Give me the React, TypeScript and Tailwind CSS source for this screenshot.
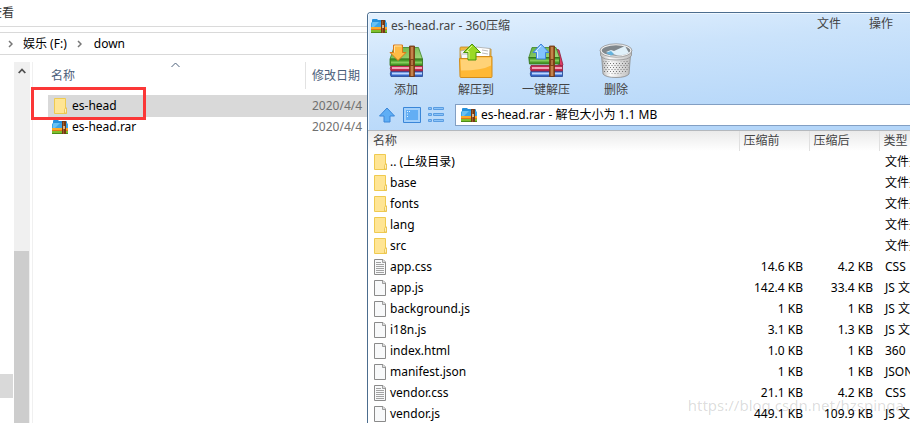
import { useId } from "react";

const folderType = "文件夹";

const entries = [
  { name: ".. (上级目录)", kind: "folder", before: "", after: "", type: folderType },
  { name: "base", kind: "folder", before: "", after: "", type: folderType },
  { name: "fonts", kind: "folder", before: "", after: "", type: folderType },
  { name: "lang", kind: "folder", before: "", after: "", type: folderType },
  { name: "src", kind: "folder", before: "", after: "", type: folderType },
  { name: "app.css", kind: "text", before: "14.6 KB", after: "4.2 KB", type: "CSS" },
  { name: "app.js", kind: "file", before: "142.4 KB", after: "33.4 KB", type: "JS 文件" },
  { name: "background.js", kind: "file", before: "1 KB", after: "1 KB", type: "JS 文件" },
  { name: "i18n.js", kind: "file", before: "3.1 KB", after: "1.3 KB", type: "JS 文件" },
  { name: "index.html", kind: "file", before: "1.0 KB", after: "1 KB", type: "360" },
  { name: "manifest.json", kind: "file", before: "1 KB", after: "1 KB", type: "JSON 文件" },
  { name: "vendor.css", kind: "text", before: "21.1 KB", after: "4.2 KB", type: "CSS" },
  { name: "vendor.js", kind: "file", before: "449.1 KB", after: "109.9 KB", type: "JS 文件" },
];

function FolderIcon() {
  return (
    <svg width="14" height="16" viewBox="0 0 14 16" className="shrink-0">
      <path d="M.5.5h11v9.500h1v5.500H.5z" fill="#ffe594" stroke="#efca50" />
      <path d="M10.500 15v-3.500l1-1.500h1V15z" fill="#fff0b8" stroke="#e8bf48" strokeWidth=".8" />
    </svg>
  );
}

function FileIcon({ lined }: { lined?: boolean }) {
  return (
    <svg width="14" height="16" viewBox="0 0 14 16" className="shrink-0">
      <path d="M.5.5H9L11.500 3v12.500H.5z" fill="#f8f9fa" stroke="#8a8a8a" />
      <path d="M8.500.500V3.500h3" fill="#dcdcdc" stroke="#8a8a8a" strokeWidth=".8" />
      {lined && <path d="M2 3.500h5M2 5.500h8M2 7.500h8M2 9.500h8M2 11.500h8M2 13.500h8" stroke="#a2a2a2" />}
    </svg>
  );
}

function RarIcon() {
  return (
    <svg width="16" height="14" viewBox="0 0 16 14" className="shrink-0">
      <path d="M1 1q0-1 1-1h4l1 1h7q1 0 1 1v6H1z" fill="#2490db" />
      <path d="M0 4l1-1h14l1 1v4H0z" fill="#3ba5e8" />
      <path d="M1 4l1-1h6L3 8H1z" fill="#69c1f2" />
      <path d="M0 8h16v3H0z" fill="#fba929" />
      <path d="M0 10h16v1H0z" fill="#e07818" />
      <path d="M0 11h16v3H0z" fill="#7fbf2c" />
      <path d="M0 13h16v1H0z" fill="#4c8c17" />
      <path d="M10 1h4v13h-4z" fill="#743914" />
      <path d="M11 2h1v12h-1z" fill="#a0602e" />
      <path d="M11 6h2v3h-2z" fill="#dcb68c" />
    </svg>
  );
}

/* Stack of three books held by a strap */
function Books({ open }: { open?: boolean }) {
  const id = useId();
  return (
    <>
      <defs>
        <linearGradient id={id} x1="0" y1="0" x2="1" y2="1">
          <stop offset="0" stopColor="#62b043" />
          <stop offset="1" stopColor="#a4d97c" />
        </linearGradient>
      </defs>
      <path d="M3 28h31.500v5.500H3q-1.500-2.500 0-5.500z" fill="#3566c6" stroke="#24458f" strokeWidth=".8" />
      <path d="M4 30.500h30" stroke="#bcd6ff" strokeWidth="2" />
      <path d="M3 22.500h31.500V28H3q-1.500-2.500 0-5.500z" fill="#c22b50" stroke="#8a1e3e" strokeWidth=".8" />
      <path d="M4 25h30" stroke="#f0a3b8" strokeWidth="2" />
      {open && <path d="M28 6l3 1 4 15-1 1-6-3z" fill="#dc3a64" stroke="#8a1e3e" strokeWidth=".8" />}
      {open ? (
        <>
          <path d="M4 4.500h24l3.500 10H.8z" fill={`url(#${id})`} stroke="#3f8526" strokeWidth=".8" />
          <path d="M.8 14.500h30.700V21H1.500z" fill="#4a9a2a" stroke="#2e6e16" strokeWidth=".8" />
          <path d="M2 17.500h29" stroke="#86cc5c" strokeWidth="2" />
        </>
      ) : (
        <>
          <path d="M6 4.500h24.500l4 11.500H2z" fill={`url(#${id})`} stroke="#3f8526" strokeWidth=".8" />
          <path d="M2 16h32.500v6.500H2z" fill="#4a9a2a" stroke="#2e6e16" strokeWidth=".8" />
          <path d="M3 19.500h31" stroke="#86cc5c" strokeWidth="2" />
        </>
      )}
      <path d="M21.500 3h5v30.500h-5z" fill="#9c5624" stroke="#693510" strokeWidth=".8" />
      <path d="M24 4v29" stroke="#d1935a" strokeWidth="1.500" />
      <path d="M22 16h4.500v7H22z" fill="#7e4218" />
      <path d="M24 17v5" stroke="#e0a970" />
    </>
  );
}

function AddIcon() {
  return (
    <svg width="36" height="36" viewBox="0 0 36 36">
      <Books />
      <path d="M5.500 2h9v7.500H18L10 17.500 2 9.500h3.500z" fill="#ffbb45" stroke="#d8781a" />
      <path d="M6.500 9.500V3h7" fill="none" stroke="#ffe3a6" />
    </svg>
  );
}

function ExtractToIcon() {
  return (
    <svg width="36" height="36" viewBox="0 0 36 36">
      <path d="M2 5q0-1 1-1h8l2 2h20v13H2z" fill="#f0b840" stroke="#c08820" strokeWidth=".8" />
      <path d="M2.500 8l15-3 2 13H4z" fill="#f8f8f8" stroke="#aaa" strokeWidth=".8" />
      <path d="M18 4l14 1.500-1 13H17z" fill="#fff" stroke="#aaa" strokeWidth=".8" />
      <path d="M24 7l6 1M24 10l6 1M4 11h7" stroke="#bbb" />
      <path d="M1.500 15.500h11l3-2h18.500v20q0 1-1 1H3q-1 0-1-1z" fill="#ffb834" stroke="#d18d1c" />
      <path d="M2.500 16.500h11l2.500-2h17v8q-9 5-30 5z" fill="#ffd277" />
      <path d="M14 1l8.500 8.500H18V17h-8V9.500H5.500z" fill="#9ad925" stroke="#4c940f" />
      <path d="M11 16V8.500H8.500L14 3" fill="none" stroke="#ddf68e" />
    </svg>
  );
}

function OneKeyIcon() {
  return (
    <svg width="36" height="36" viewBox="0 0 36 36">
      <Books open />
      <path d="M13 1l8 8.500h-3.500V16h-9V9.500H5z" fill="#83c3fd" stroke="#3f80db" />
      <path d="M9.500 15V8.500H7.500L13 3" fill="none" stroke="#d5ecff" />
    </svg>
  );
}

function TrashIcon() {
  return (
    <svg width="36" height="36" viewBox="0 0 36 36">
      <defs>
        <pattern id="mesh" width="3" height="4" patternUnits="userSpaceOnUse">
          <path d="M0 0h1v1H0zM1.500 2h1v1h-1z" fill="#777" />
        </pattern>
        <linearGradient id="metal">
          <stop offset="0" stopColor="#b5b5b5" />
          <stop offset=".3" stopColor="#fcfcfc" />
          <stop offset="1" stopColor="#bcbcbc" />
        </linearGradient>
      </defs>
      <path d="M3.500 12L5 31q3 3.500 13 3.500T31 31l1.500-19z" fill="url(#metal)" stroke="#888" strokeWidth=".8" />
      <path d="M5 17q13 4 26 0l-1 12q-12 4-24 0z" fill="url(#mesh)" />
      <path d="M2.500 7.500v5q2 4.500 15.500 4.500t15.500-4.500v-5z" fill="url(#metal)" stroke="#909090" strokeWidth=".8" />
      <ellipse cx="18" cy="7.500" rx="15" ry="6" fill="#80878c" stroke="#f0f0f0" strokeWidth="1.500" />
      <ellipse cx="18" cy="7.500" rx="16" ry="6.700" fill="none" stroke="#888" strokeWidth=".7" />
      <path d="M8 9l5-2 3 1 11-5 4 7q-6 3-13 2z" fill="#e0f0f9" />
      <path d="M8 10l5-2 3 3-3 1.500z" fill="#65b3de" />
    </svg>
  );
}

function UpIcon() {
  return (
    <svg width="18" height="16" viewBox="0 0 18 16">
      <path d="M9 1l7.500 8H12v6H6V9H1.500z" fill="#5eaef5" stroke="#3a86d8" />
    </svg>
  );
}

function ViewIcon() {
  return (
    <svg width="18" height="16" viewBox="0 0 18 16">
      <path d="M.5.500h17v15H.5z" fill="#a3d0fb" stroke="#3a86d8" />
      <path d="M3 3h12v10H3z" fill="#63aef4" />
      <path d="M4 4.500h1M6 4.500h1M4 7h1M4 9.500h1" stroke="#e2f2ff" />
    </svg>
  );
}

function ListIcon() {
  return (
    <svg width="16" height="16" viewBox="0 0 16 16">
      <path
        d="M.5.500h3v2h-3zM5.500.500h10v2h-10zM.5 6.500h3v2h-3zM5.500 6.500h10v2h-10zM.5 12.500h3v2h-3zM5.500 12.500h10v2h-10z"
        fill="#8cc3f7"
        stroke="#5a9de2"
      />
    </svg>
  );
}

function Chevron({ up }: { up?: boolean }) {
  return up ? (
    <svg width="9" height="6" viewBox="0 0 9 6">
      <path d="M.5 5l4-4 4 4" fill="none" stroke="currentColor" />
    </svg>
  ) : (
    <svg width="5" height="8" viewBox="0 0 5 8">
      <path d="M1 1l3 3-3 3" fill="none" stroke="#777" strokeWidth="1.500" />
    </svg>
  );
}

const tools = [
  { label: "添加", Icon: AddIcon },
  { label: "解压到", Icon: ExtractToIcon },
  { label: "一键解压", Icon: OneKeyIcon },
  { label: "删除", Icon: TrashIcon },
];

function Explorer() {
  return (
    <section className="flex w-[367px] shrink-0 flex-col">
      <div className="flex h-[27px] border-b border-[#dadada]">
        <button className="flex w-3.5 justify-end overflow-hidden whitespace-nowrap pt-1 leading-[18px] text-[#333]">查看</button>
      </div>
      <nav className="mt-[5px] flex h-[23px] items-center border-y border-[#d9d9d9] pl-2 text-black">
        <Chevron />
        <a href="#drive" className="ml-2.5">娱乐 (F:)</a>
        <span className="ml-2.5"><Chevron /></span>
        <a href="#down" className="ml-3">down</a>
      </nav>
      <div className="mt-[7px] flex min-h-0 flex-1">
        <div className="flex w-3.5 shrink-0 flex-col">
          <div className="mt-[312px] mr-px h-6 shrink-0 bg-[#d9d9d9]" />
        </div>
        <div className="flex w-4 shrink-0 flex-col items-center bg-[#f0f0f0] text-[#505050]">
          <div className="flex h-[189px] shrink-0 pt-1.5">
            <svg width="8" height="6" viewBox="0 0 8 6">
              <path d="M.7 5L4 1.500 7.300 5" fill="none" stroke="currentColor" strokeWidth="1.800" />
            </svg>
          </div>
          <div className="mr-px w-[15px] flex-1 bg-[#cdcdcd]" />
        </div>
        <div className="ml-0.5 flex-1 border-l border-[#f0f0f0]">
          <table className="w-full table-fixed border-collapse">
            <thead>
              <tr className="h-[33px] text-left align-top text-[#4c607a]">
                <th className="w-[273px] p-0 font-normal">
                  <div className="flex h-[27px] justify-between border-r border-[#e2e2e2] pl-[18px]">
                    <span className="pt-[5px] leading-[18px]">名称</span>
                    <span className="mr-[125px] h-2"><Chevron up /></span>
                  </div>
                </th>
                <th className="overflow-hidden p-0 pt-[5px] pl-1.5 font-normal leading-[18px] whitespace-nowrap">修改日期</th>
              </tr>
            </thead>
            <tbody>
              <tr className="h-[22px]">
                <td className="relative p-0 pl-[15px]">
                  <div className="flex h-[22px] items-center gap-1 bg-[#d9d9d9] pl-1.5 text-black">
                    <FolderIcon />es-head
                  </div>
                  <div className="pointer-events-none absolute -top-2 -left-0.5 h-[33px] w-[115px] border-3 border-[#fb3737]" />
                </td>
                <td className="bg-[#d9d9d9] p-0 pl-1.5 text-[#707070]">2020/4/4</td>
              </tr>
              <tr className="h-5">
                <td className="p-0 pl-[15px]">
                  <div className="flex items-center gap-1 pl-1 text-black">
                    <RarIcon />es-head.rar
                  </div>
                </td>
                <td className="p-0 pl-1.5 text-[#707070]">2020/4/4</td>
              </tr>
            </tbody>
          </table>
        </div>
      </div>
    </section>
  );
}

function Archiver() {
  return (
    <section className="mt-3 flex min-w-0 flex-1 flex-col overflow-hidden rounded-tl border-t border-l border-[#4c6d8e] bg-white">
      <header className="border-b border-[#b4b8bd] bg-[linear-gradient(175deg,#e4f1fe_0%,#cbe3fb_35%,#b4d6f9_85%)] shadow-[inset_1px_1px_0_#eef7ff]">
        <div className="flex h-[26px] items-center justify-between pr-[17px] pl-[3px] text-[#444]">
          <h1 className="flex items-center gap-1"><RarIcon />es-head.rar - 360压缩</h1>
          <div className="flex gap-7 pb-1">
            <button>文件</button>
            <button>操作</button>
          </div>
        </div>
        <div className="flex pt-1 pl-[3px] text-[#444]">
          {tools.map(({ label, Icon }) => (
            <button key={label} className="flex w-[70px] flex-col items-center gap-0.5 leading-[18px] whitespace-nowrap">
              <Icon />
              {label}
            </button>
          ))}
        </div>
        <div className="mt-[5px] flex h-[26px] items-start pl-2.5">
          <div className="mr-[11px] flex h-[22px] items-center gap-[7px]">
            <button aria-label="向上"><UpIcon /></button>
            <button aria-label="视图"><ViewIcon /></button>
            <button aria-label="列表"><ListIcon /></button>
          </div>
          <label className="flex h-[22px] flex-1 items-center gap-1 border border-r-0 border-[#829fc3] bg-white pl-[5px] text-black">
            <RarIcon />
            <input aria-label="路径" defaultValue="es-head.rar - 解包大小为 1.1 MB" className="min-w-0 flex-1 outline-none" />
          </label>
        </div>
      </header>
      <table className="w-full table-fixed border-collapse text-black">
        <thead>
          <tr className="h-5 bg-linear-to-b from-[#eaeaea] to-white text-left text-[#444]">
            <th className="p-0 pl-[5px] font-normal">名称</th>
            <th className="w-[70px] border-l border-[#e0e0e0] p-0 pl-1 font-normal">压缩前</th>
            <th className="w-[70px] border-l border-[#e0e0e0] p-0 pl-1 font-normal">压缩后</th>
            <th className="w-[31px] overflow-hidden border-l border-[#e0e0e0] p-0 pl-1 font-normal whitespace-nowrap">类型</th>
          </tr>
        </thead>
        <tbody>
          {entries.map((entry) => (
            <tr key={entry.name} className="h-[21px] whitespace-nowrap">
              <td className="p-0 pl-1.5">
                <div className="flex items-center gap-[2px]">
                  {entry.kind === "folder" ? <FolderIcon /> : <FileIcon lined={entry.kind === "text"} />}
                  {entry.name}
                </div>
              </td>
              <td className="p-0 pr-1.5 text-right">{entry.before}</td>
              <td className="p-0 pr-1.5 text-right">{entry.after}</td>
              <td className="overflow-hidden p-0 pl-1.5">{entry.type}</td>
            </tr>
          ))}
        </tbody>
      </table>
    </section>
  );
}

export default function App() {
  return (
    <main className="relative flex h-screen overflow-hidden bg-white font-['Noto_Sans','Noto_Sans_CJK_SC',sans-serif] text-xs">
      <Explorer />
      <Archiver />
      <span className="pointer-events-none absolute right-1.5 bottom-2 text-[15px] text-black/15">https://blog.csdn.net/hzspinga</span>
    </main>
  );
}
